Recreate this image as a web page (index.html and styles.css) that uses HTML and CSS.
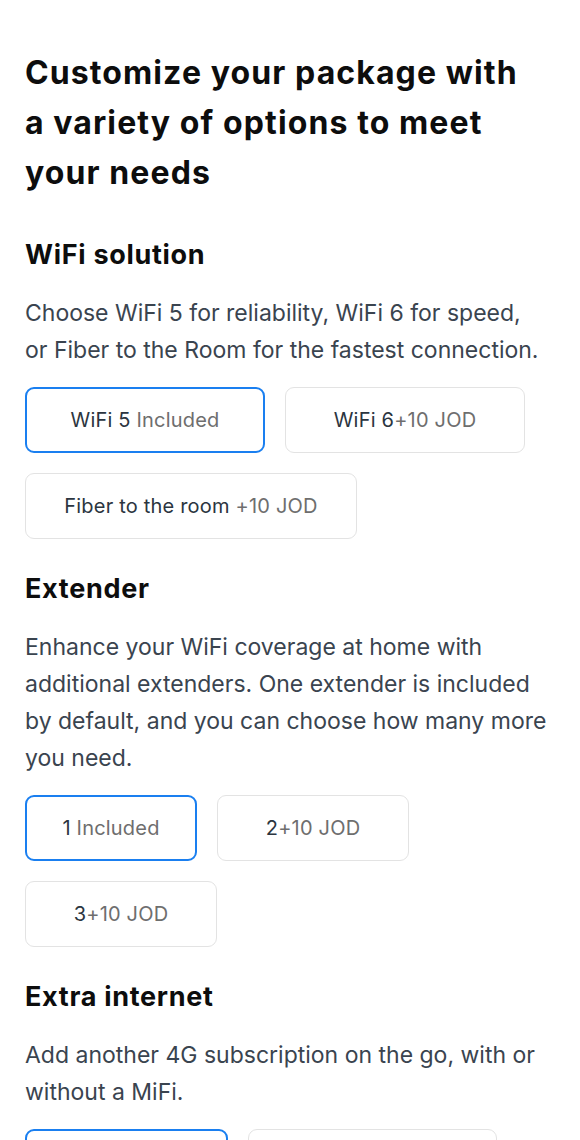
FILE: index.html
```
<!DOCTYPE html>
<html>
<head>
	<title>Customize your package</title>
	<meta charset="utf-8"/>
	<link rel="stylesheet" href="styles.css">
</head>
<body>

<div class="page">
	<h1 class="title">Customize your package with<br>a variety of options to meet<br>your needs</h1>

	<div class="section">
		<h2>WiFi solution</h2>
		<p>Choose WiFi 5 for reliability, WiFi 6 for speed,<br>or Fiber to the Room for the fastest connection.</p>
		<div class="options">
			<button class="opt active w240">WiFi 5 <span>Included</span></button>
			<button class="opt w240">WiFi 6<span>+10 JOD</span></button>
			<button class="opt w332">Fiber to the room <span>+10 JOD</span></button>
		</div>
	</div>

	<div class="section">
		<h2>Extender</h2>
		<p>Enhance your WiFi coverage at home with<br>additional extenders. One extender is included<br>by default, and you can choose how many more<br>you need.</p>
		<div class="options">
			<button class="opt active w172">1 <span>Included</span></button>
			<button class="opt w192">2<span>+10 JOD</span></button>
			<button class="opt w192">3<span>+10 JOD</span></button>
		</div>
	</div>

	<div class="section">
		<h2>Extra internet</h2>
		<p>Add another 4G subscription on the go, with or<br>without a MiFi.</p>
		<div class="options">
			<button class="opt active w203">4G only <span>+5 JOD</span></button>
			<button class="opt w249">4G with MiFi <span>+10 JOD</span></button>
		</div>
	</div>
</div>

</body>
</html>
```

FILE: styles.css
```
* {
	margin: 0px;
	padding: 0px;
	box-sizing: border-box;
}

body {
	font-family: Inter, "Noto Sans", sans-serif;
	background-color: #ffffff;
	color: #111111;
}

.page {
	padding: 48px 10px 40px 25px;
}

.title {
	font-size: 32px;
	line-height: 50px;
	font-weight: 700;
	color: #0d0d0d;
	letter-spacing: 1.1px;
	white-space: nowrap;
	margin-bottom: 40px;
}

.section {
	margin-bottom: 33px;
}
	.section h2 {
		font-size: 27px;
		line-height: 34px;
		font-weight: 700;
		color: #0d0d0d;
		letter-spacing: 0.7px;
		margin-bottom: 23px;
	}
	.section p {
		font-size: 23px;
		line-height: 37px;
		color: #3a444f;
		white-space: nowrap;
		margin-bottom: 18px;
	}

.options {
	display: flex;
	flex-wrap: wrap;
	gap: 20px;
}
	.opt {
		height: 66px;
		border: 1px solid #e3e3e3;
		border-radius: 9px;
		background-color: #ffffff;
		font-family: Inter, "Noto Sans", sans-serif;
		font-size: 20px;
		letter-spacing: 0.2px;
		color: #2b3540;
		text-align: center;
	}
		.opt span {
			color: #6e6e6e;
		}
	.opt.active {
		border: 2px solid #1a7ff0;
	}

.w240 { width: 240px; }
.w332 { width: 332px; }
.w172 { width: 172px; }
.w192 { width: 192px; }
.w203 { width: 203px; }
.w249 { width: 249px; }
```
